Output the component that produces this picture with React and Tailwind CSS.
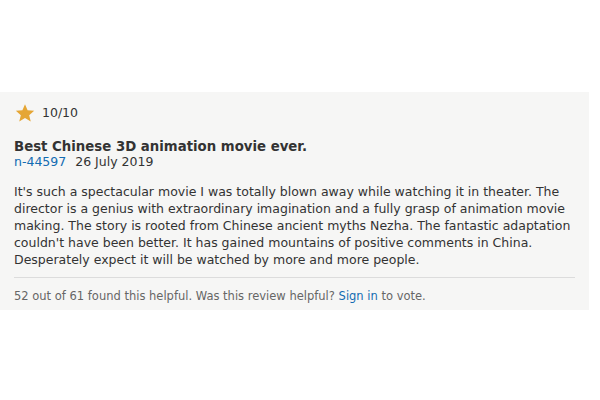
const Star = () => (
  <svg viewBox="0 0 24 24" className="w-[20px] h-[20px]">
    <path fill="#e5a635" d="M12 1.5l3.1 7.3 7.9.6-6 5.2 1.9 7.7L12 18.1l-6.9 4.2L7 14.6 1 9.4l7.9-.6z" />
  </svg>
);

const App = () => {
  return (
    <div className="w-[600px] h-[400px] bg-white pt-[92px] font-['DejaVu_Sans',sans-serif]">
      <div className="w-[589px] bg-[#f6f6f5] pl-[14px] pr-[14px] pt-[11px] pb-[7px] text-[#333]">
        {/* rating */}
        <div className="flex items-center gap-[7px] pl-[1px]">
          <Star />
          <span className="text-[12.5px] text-[#333]">10/10</span>
        </div>

        {/* title + meta */}
        <div className="mt-[16px] text-[13.3px] font-bold leading-[16px]">
          Best Chinese 3D animation movie ever.
        </div>
        <div className="text-[12.5px] leading-[13px]">
          <a className="text-[#136cb2]">n-44597</a>
          <span className="ml-[9px]">26 July 2019</span>
        </div>

        {/* body */}
        <p className="mt-[15px] text-[12.5px] leading-[17px]">
          It's such a spectacular movie I was totally blown away while watching it in theater. The director is a genius
          with extraordinary imagination and a fully grasp of animation movie making. The story is rooted from Chinese
          ancient myths Nezha. The fantastic adaptation couldn't have been better. It has gained mountains of positive
          comments in China. Desperately expect it will be watched by more and more people.
        </p>

        <div className="mt-[9px] border-t border-[#dcdcdc] pt-[11px] text-[11.5px] text-[#666] leading-[14px]">
          52 out of 61 found this helpful. Was this review helpful? <a className="text-[#136cb2]">Sign in</a> to vote.
        </div>
      </div>
    </div>
  );
};

export default App;
